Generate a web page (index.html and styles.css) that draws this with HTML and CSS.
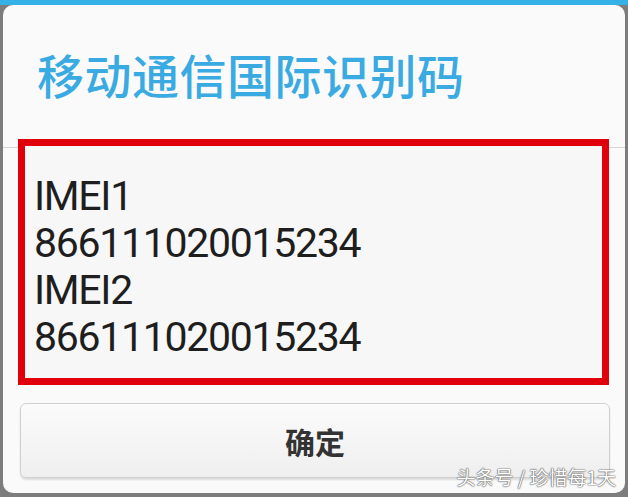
FILE: index.html
```html
<!DOCTYPE html>
<html>
<head>
    <title>移动通信国际识别码</title>
    <link rel="stylesheet" href="styles.css">
</head>
<body>
    <div class="topbar"></div>
    <div class="dialog">
        <div class="dialog-header">
            <h1 class="dialog-title">移动通信国际识别码</h1>
        </div>

        <div class="imei-box">
            <div class="imei-line">IMEI1</div>
            <div class="imei-line">866111020015234</div>
            <div class="imei-line">IMEI2</div>
            <div class="imei-line">866111020015234</div>
        </div>

        <div class="actions">
            <button class="btn-ok">确定</button>
        </div>

        <div class="watermark">头条号 / 珍惜每1天</div>
    </div>
</body>
</html>
```

FILE: styles.css
```css
html, body {
    margin: 0;
    padding: 0;
}
body {
    width: 628px;
    height: 497px;
    overflow: hidden;
    background: #7d7d7d;
    font-family: Roboto, "Noto Sans CJK SC", sans-serif;
}
.topbar {
    height: 5px;
    background: #35b1e8;
}
.dialog {
    position: relative;
    margin: 0 3px;
    height: 488px;
    background: #fafafa;
    border-radius: 10px;
    overflow: hidden;
}
.dialog-header {
    height: 143px;
    box-sizing: border-box;
    padding: 45px 0 0 34px;
    border-bottom: 1px solid #d6d6d6;
}
.dialog-title {
    margin: 0;
    font-family: "Noto Sans CJK SC", sans-serif;
    font-size: 47px;
    font-weight: 500;
    line-height: 47px;
    color: #3aaae2;
    letter-spacing: 0.5px;
}
.imei-box {
    margin: -9px 16px 0 15px;
    height: 246px;
    box-sizing: border-box;
    border: 7px solid #e0000b;
    background: #f7f7f7;
    padding: 27px 0 0 9px;
    position: relative;
}
.imei-line {
    font-size: 41px;
    line-height: 47px;
    letter-spacing: -1.3px;
    color: #1e1e1e;
}
.actions {
    padding: 18px 15px 0 17px;
}
.btn-ok {
    display: block;
    width: 100%;
    height: 75px;
    border: 1px solid #d0d0d0;
    border-radius: 6px;
    background: linear-gradient(#fbfbfb, #efefef);
    box-shadow: 0 2px 2px rgba(0, 0, 0, 0.12);
    font-family: "Noto Sans CJK SC", sans-serif;
    font-size: 30px;
    font-weight: 700;
    color: #333;
    padding: 0;
}
.watermark {
    position: absolute;
    right: 9px;
    top: 460px;
    font-family: "Noto Sans CJK SC", sans-serif;
    font-size: 19px;
    line-height: 24px;
    color: #fff;
    text-shadow: 0 0 1px #555, 0 0 1px #555, 0 0 2px #888;
}
```
